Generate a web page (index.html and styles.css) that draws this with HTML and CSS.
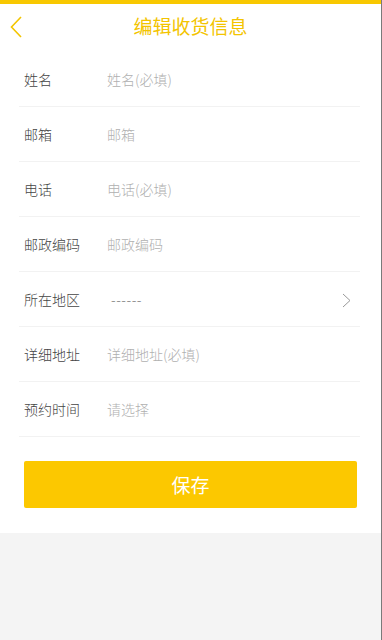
FILE: index.html
```html
<!DOCTYPE html>
<html lang="zh">
<head>
<meta charset="utf-8">
<title>编辑收货信息</title>
<link rel="stylesheet" href="styles.css">
</head>
<body>
<div class="page">
  <div class="topbar"></div>
  <header class="header">
    <span class="back">
      <svg width="12" height="22" viewBox="0 0 12 22"><path d="M11 1 L1.5 11 L11 21" fill="none" stroke="#f3c500" stroke-width="1.6"/></svg>
    </span>
    <h1 class="title">编辑收货信息</h1>
  </header>
  <section class="card">
    <div class="form">
      <div class="row"><span class="label">姓名</span><span class="value">姓名(必填)</span></div>
      <div class="row"><span class="label">邮箱</span><span class="value">邮箱</span></div>
      <div class="row"><span class="label">电话</span><span class="value">电话(必填)</span></div>
      <div class="row"><span class="label">邮政编码</span><span class="value">邮政编码</span></div>
      <div class="row"><span class="label">所在地区</span><span class="value dash">------</span>
        <span class="arrow"><svg width="9" height="15" viewBox="0 0 9 15"><path d="M1 1 L8 7.5 L1 14" fill="none" stroke="#999" stroke-width="1"/></svg></span>
      </div>
      <div class="row"><span class="label">详细地址</span><span class="value">详细地址(必填)</span></div>
      <div class="row"><span class="label">预约时间</span><span class="value">请选择</span></div>
    </div>
    <button class="save">保存</button>
  </section>
</div>
</body>
</html>
```
FILE: styles.css
```css
html, body {
  margin: 0;
  padding: 0;
  height: 100%;
}
body {
  background: #f4f4f4;
  font-family: "Noto Sans CJK SC", "Noto Sans", sans-serif;
}
.page {
  width: 381px;
  min-height: 640px;
  border-right: 1px solid #7a7a7a;
  background: #f4f4f4;
}
.topbar {
  height: 4px;
  background: #f8c800;
}
.header {
  position: relative;
  height: 48px;
  background: #fff;
  display: flex;
  align-items: center;
  justify-content: center;
}
.back {
  position: absolute;
  left: 10px;
  top: 12px;
  display: flex;
}
.title {
  margin: 0;
  font-size: 19px;
  font-weight: normal;
  color: #f3c400;
  line-height: 1;
  margin-top: -5px;
}
.card {
  background: #fff;
  padding-bottom: 25px;
}
.form {
  margin: 0 21px 0 19px;
}
.row {
  height: 54px;
  border-bottom: 1px solid #f2f2f2;
  display: flex;
  align-items: center;
  padding-left: 5px;
  font-size: 14px;
}
.label {
  width: 83px;
  color: #444;
  font-weight: 300;
}
.value {
  color: #b0b0b0;
  flex: 1;
  font-weight: 300;
}
.dash {
  padding-left: 4px;
  color: #777;
  letter-spacing: 0.5px;
}
.arrow {
  display: flex;
  margin-right: 9px;
  margin-top: 2px;
}
.save {
  display: block;
  margin: 24px 24px 0 24px;
  width: 333px;
  height: 47px;
  border: none;
  border-radius: 2px;
  background: #fcc800;
  color: #fff;
  font-family: "Noto Sans CJK SC", "Noto Sans", sans-serif;
  font-size: 19px;
  padding: 0;
}
```
